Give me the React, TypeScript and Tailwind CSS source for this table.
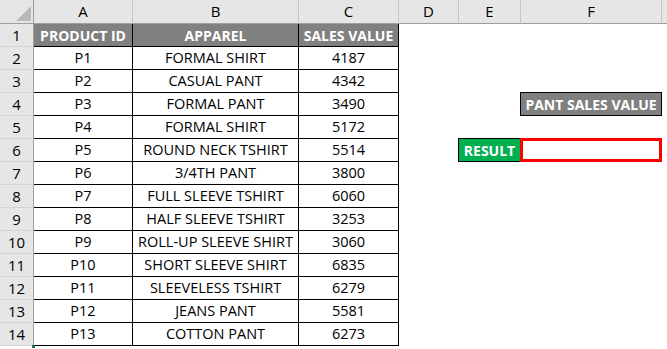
import React from 'react'

const rows: [string, string, string][] = [
    ['P1', 'FORMAL SHIRT', '4187'],
    ['P2', 'CASUAL PANT', '4342'],
    ['P3', 'FORMAL PANT', '3490'],
    ['P4', 'FORMAL SHIRT', '5172'],
    ['P5', 'ROUND NECK TSHIRT', '5514'],
    ['P6', '3/4TH PANT', '3800'],
    ['P7', 'FULL SLEEVE TSHIRT', '6060'],
    ['P8', 'HALF SLEEVE TSHIRT', '3253'],
    ['P9', 'ROLL-UP SLEEVE SHIRT', '3060'],
    ['P10', 'SHORT SLEEVE SHIRT', '6835'],
    ['P11', 'SLEEVELESS TSHIRT', '6279'],
    ['P12', 'JEANS PANT', '5581'],
    ['P13', 'COTTON PANT', '6273'],
]

const colHead = 'flex items-center justify-center bg-[#e6e6e6] border-r border-b border-r-[#c6c6c6] border-b-[#9e9e9e] text-[15px]'
const rowHead = 'flex items-center justify-center bg-[#e6e6e6] border-r border-b border-r-[#9e9e9e] border-b-[#d4d4d4] text-[15px]'
const cell = 'flex items-center justify-center border-r border-b border-black whitespace-nowrap'

export default function App() {
    return (
        <div
            className="relative w-[667px] h-[349px] overflow-hidden bg-white text-black text-[14.5px]"
            style={{ fontFamily: '"Open Sans", sans-serif' }}
        >
            <div className="grid grid-cols-[34px_99px_166px_100px_60px_62px_141px_6px] grid-rows-[24px_repeat(14,23px)]">
                {/* column headers */}
                <div className="relative bg-[#e6e6e6] border-r border-b border-r-[#9e9e9e] border-b-[#9e9e9e]">
                    <div className="absolute right-[2px] bottom-[2px] w-0 h-0 border-l-[15px] border-l-transparent [border-bottom:15px_solid_#b9b9b9]" />
                </div>
                {['A', 'B', 'C', 'D', 'E', 'F'].map(c => (
                    <div key={c} className={colHead}>{c}</div>
                ))}
                <div className="bg-[#e6e6e6] border-b border-b-[#9e9e9e]" />

                {/* row 1: table header */}
                <div className={rowHead}>1</div>
                {['PRODUCT ID', 'APPAREL', 'SALES VALUE'].map(h => (
                    <div key={h} className={`${cell} bg-[#808080] text-white font-bold text-[14px]`}>{h}</div>
                ))}
                <div />
                <div />
                <div />
                <div />

                {rows.map((r, i) => {
                    const n = i + 2
                    return (
                        <React.Fragment key={n}>
                            <div className={rowHead}>{n}</div>
                            <div className={cell}>{r[0]}</div>
                            <div className={cell}>{r[1]}</div>
                            <div className={cell}>{r[2]}</div>
                            <div />
                            {n === 6 ? (
                                <div className="-mt-px -ml-px flex items-center justify-center border border-black bg-[#00b050] text-white font-bold text-[14px]">
                                    RESULT
                                </div>
                            ) : (
                                <div />
                            )}
                            {n === 4 ? (
                                <div className="-mt-px -ml-px flex items-center justify-center border border-black bg-[#808080] text-white font-bold text-[14px] whitespace-nowrap">
                                    PANT SALES VALUE
                                </div>
                            ) : n === 6 ? (
                                <div className="-mt-px -ml-px border-[3px] border-[#ff0000] bg-white" />
                            ) : (
                                <div />
                            )}
                            <div />
                        </React.Fragment>
                    )
                })}
            </div>
            <div className="absolute left-[32px] top-[345px] w-[3px] h-[3px] bg-[#217346]" />
        </div>
    )
}
